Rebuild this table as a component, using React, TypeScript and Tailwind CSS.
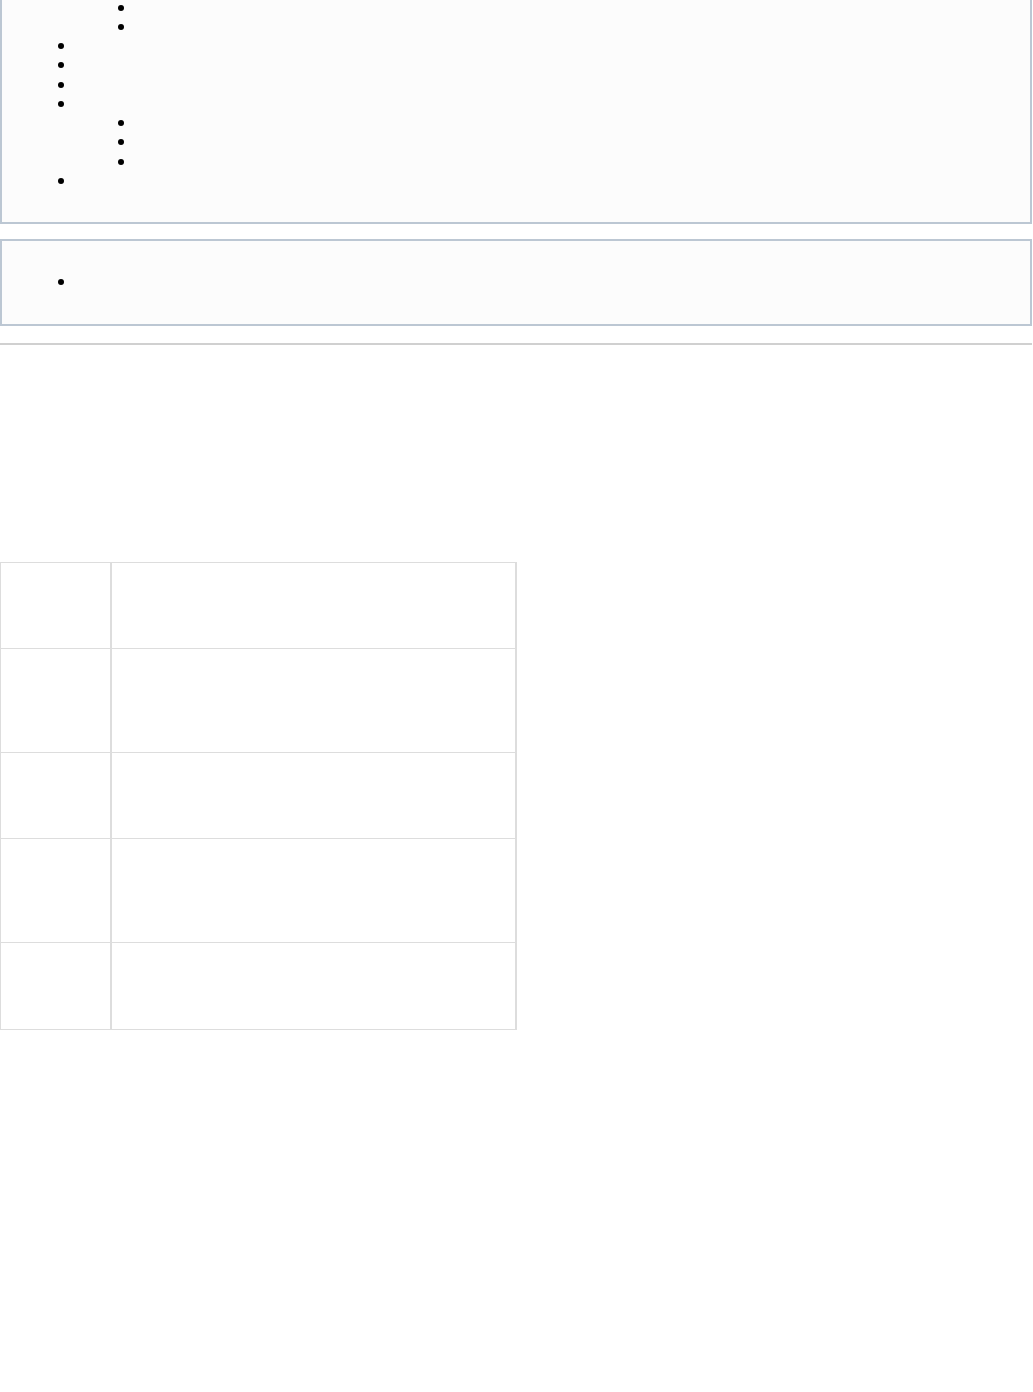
import React from "react";

type Bullet = { level: 1 | 2 };

const topBullets: Bullet[] = [
  { level: 2 },
  { level: 2 },
  { level: 1 },
  { level: 1 },
  { level: 1 },
  { level: 1 },
  { level: 2 },
  { level: 2 },
  { level: 2 },
  { level: 1 },
];

const tableRows = [86, 104, 86, 104, 87];

const BulletRow = ({ level }: Bullet) => (
  <li className="flex h-[19.25px] items-center">
    <span
      className={`size-[6px] rounded-full bg-black ${
        level === 1 ? "ml-[58px]" : "ml-[118px]"
      }`}
    />
  </li>
);

export default function App() {
  return (
    <div className="min-h-[1392px] w-[1033px] bg-white font-['Liberation_Sans',Arial,sans-serif] text-black">
      {/* panel that starts above the fold */}
      <div className="-mt-[2px] w-[1032px] border-2 border-t-0 border-[#bcc7d3] bg-[#fcfcfc] pb-[31px]">
        <ul className="-ml-[2px]">
          {topBullets.map((b, i) => (
            <BulletRow key={i} level={b.level} />
          ))}
        </ul>
      </div>

      <div className="mt-[15px] w-[1032px] border-2 border-[#bcc7d3] bg-[#fcfcfc] pt-[32px] pb-[32px]">
        <ul className="-ml-[2px]">
          <BulletRow level={1} />
        </ul>
      </div>

      <div className="mt-[17px] h-[2px] w-[1032px] bg-[#d0d0d0]" />

      {/* table */}
      <div className="mt-[217px] w-[517px] border-t border-l border-[#dddddd]">
        {tableRows.map((h, i) => (
          <div
            key={i}
            className="flex border-b border-[#dddddd]"
            style={{ height: h }}
          >
            <div className="w-[111px] border-r-2 border-[#dddddd]" />
            <div className="flex-1 border-r-2 border-[#dddddd]" />
          </div>
        ))}
      </div>
    </div>
  );
}
